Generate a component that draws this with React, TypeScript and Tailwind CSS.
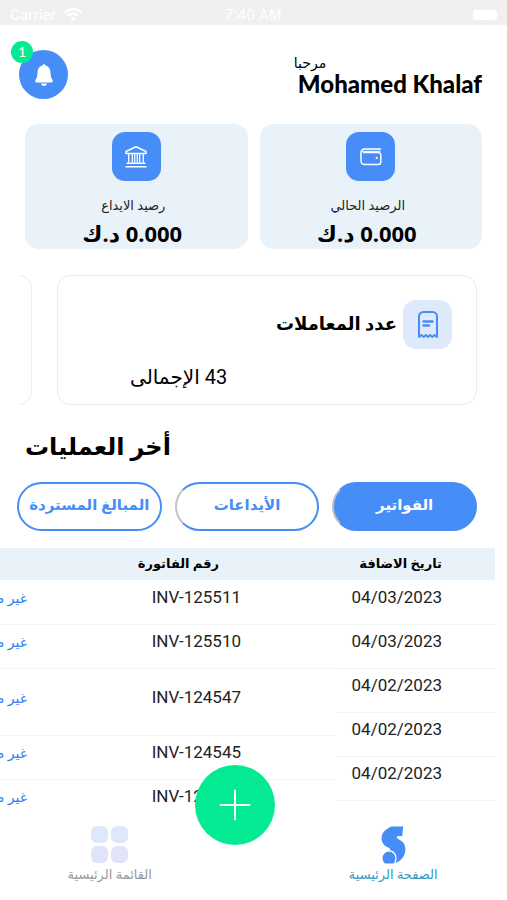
import type { ReactNode } from "react";

const arabic = "font-['Lato','DejaVu_Sans',sans-serif]";
const figures = "font-['Roboto','DejaVu_Sans',sans-serif]";

function BellIcon() {
  return (
    <svg viewBox="0 0 24 24" className="size-6" fill="#fff" aria-hidden="true">
      <path d="M12 1.200c.9 0 1.500.6 1.600 1.400 2.900.8 4.600 3 4.800 5.800.2 3.600.5 6.100 1.500 7.500.6.8.9 1.400.9 2 0 .9-.6 1.500-1.600 1.500H4.800c-1 0-1.600-.6-1.600-1.500 0-.6.3-1.200.9-2 1-1.400 1.300-3.900 1.500-7.500.2-2.800 1.900-5 4.800-5.800.1-.8.7-1.400 1.600-1.400z" />
      <path d="M9 20.600h6c-.3 1.400-1.500 2.300-3 2.300s-2.700-.9-3-2.300z" />
    </svg>
  );
}

function BankIcon() {
  return (
    <svg viewBox="0 0 24 24" className="size-6" fill="none" stroke="#fff" strokeWidth="1.500" strokeLinejoin="round" aria-hidden="true">
      <path d="M2 6.500 12 1.800 22 6.500v2H2z" />
      <path d="M4.700 8.500v9M8.300 8.500v9M10.700 8.500v9M13.300 8.500v9M15.700 8.500v9M19.300 8.500v9" strokeWidth="1.300" />
      <path d="M2.500 18.300h19M1.500 21.800h21" />
    </svg>
  );
}

function WalletIcon() {
  return (
    <svg viewBox="0 0 24 24" className="size-6" fill="none" stroke="#fff" strokeWidth="1.500" strokeLinecap="round" aria-hidden="true">
      <path d="M21.500 4H5.500A3.500 3.500 0 0 0 2 7.500V16a3.500 3.500 0 0 0 3.500 3.500H19a2.800 2.800 0 0 0 2.800-2.800V10A2.500 2.500 0 0 0 19.300 7.500H4.500" />
      <path d="M3 6.300h18" strokeWidth="1" />
      <circle cx="17.500" cy="13" r=".6" fill="#fff" strokeWidth="1" />
    </svg>
  );
}

function ReceiptIcon() {
  return (
    <svg viewBox="0 0 24 30" className="h-[30px] w-6" fill="none" stroke="#478df8" strokeWidth="2" strokeLinecap="round" strokeLinejoin="round" aria-hidden="true">
      <path d="M3 27V6.500A4.500 4.500 0 0 1 7.500 2h9A4.500 4.500 0 0 1 21 6.500V27l-2.500-2-2.200 2-2.200-2-2.100 2-2.100-2-2.200 2-2.200-2z" />
      <path d="M7.500 11.500h9M7.500 15.500h5.500" strokeWidth="2.400" />
    </svg>
  );
}

function WifiIcon() {
  return (
    <svg viewBox="0 0 18 14" className="h-[14px] w-[18px]" fill="#fff" aria-hidden="true">
      <path d="M9 0C5.500 0 2.300 1.300 0 3.500l1.700 1.800A10.600 10.600 0 0 1 9 2.500c2.800 0 5.400 1 7.300 2.800L18 3.500A13 13 0 0 0 9 0z" />
      <path d="M9 4.500c-2.300 0-4.400.9-6 2.300l1.800 1.800A6.300 6.300 0 0 1 9 7c1.600 0 3 .6 4.200 1.600L15 6.800a9 9 0 0 0-6-2.300z" />
      <path d="M9 9a4 4 0 0 0-2.800 1.100L9 13l2.800-2.900A4 4 0 0 0 9 9z" />
    </svg>
  );
}

function HomeLogo() {
  return (
    <svg viewBox="0 0 26 38" className="h-[38px] w-[26px]" fill="#478df8" aria-hidden="true">
      <path d="M23.300.500 22.200 10.300C20 9.600 17.800 9.800 16.800 10.800 16.300 11.800 17.500 12.800 19.500 13.800 23.500 15.700 25.400 19 25.400 23.300 25.400 29.500 21.800 34.500 15.500 37.300 16.200 35.700 16.600 34 16.600 32.300 16.600 28 13.800 24.700 9.800 24.300 10.800 23 10 22.300 8.200 21.500 4 19.800 1.600 16.500 1.600 12.200 1.600 7 5.500 3 11.300.5z" />
      <path d="M2.500 32a6.400 6.400 0 0 1 12.800 0c0 2.100-.5 3.800-1.600 5.400H5A6.400 6.400 0 0 1 2.500 32z" />
    </svg>
  );
}

function BalanceCard({ icon, label }: { icon: ReactNode; label: string }) {
  return (
    <section className="flex flex-1 flex-col items-center rounded-[14px] bg-[#eaf2f9] pt-2 pb-[2px]">
      <div className="flex size-[49px] items-center justify-center rounded-[13px] bg-[#478df8]">{icon}</div>
      <h2 className="mt-3 pr-[6px] text-[13px] leading-6 text-[#222]">{label}</h2>
      <p className="mt-[2px] pr-2 font-['Noto_Sans','DejaVu_Sans',sans-serif] text-[22px] leading-7 font-bold text-black">0.000 د.ك</p>
    </section>
  );
}

const filters = [
  { label: "الفواتير", style: "border-[#478df8] border-l-[#b9bec4] bg-[#478df8] text-white" },
  { label: "الأيداعات", style: "border-[#478df8] border-l-[#c4c4c4] bg-white text-[#478df8]" },
  { label: "المبالغ المستردة", style: "border-[#478df8] bg-white text-[#478df8]" },
];

const dates = ["04/03/2023", "04/03/2023", "04/02/2023", "04/02/2023", "04/02/2023"];
const invoices = ["INV-125511", "INV-125510", "INV-124547", "INV-124545", "INV-124544"];

export default function App() {
  return (
    <div dir="rtl" lang="ar" className={`flex h-screen flex-col overflow-hidden bg-white text-black ${arabic}`}>
      <div dir="ltr" className="grid h-[25px] shrink-0 grid-cols-3 items-center bg-[#f0f0f0] px-[10px] pt-1 font-['Inter',sans-serif] text-sm leading-5 text-white">
        <span className="flex items-center gap-2">Carrier <WifiIcon /></span>
        <span className="text-center">7:40 AM</span>
        <span className="h-[10px] w-6 justify-self-end rounded-[3px] bg-white" />
      </div>

      <header dir="ltr" className="flex h-[74px] shrink-0 items-start justify-between px-[25px] pt-[25px]">
        <button type="button" aria-label="الإشعارات" className="relative -ml-[6px] flex size-[49px] items-center justify-center rounded-full bg-[#478df8]">
          <BellIcon />
          <span className="absolute -top-[9px] -left-2 flex size-[22px] items-center justify-center rounded-full bg-[#04ea93] text-sm text-white">1</span>
        </button>
        <div>
          <p className="mt-1 text-sm leading-[18px]">مرحبا</p>
          <h1 className="pl-1 text-2xl leading-6 font-black">Mohamed Khalaf</h1>
        </div>
      </header>

      <main className="min-h-0 flex-1 overflow-hidden">
        <div className="mt-[25px] flex gap-3 px-[25px]">
          <BalanceCard icon={<WalletIcon />} label="الرصيد الحالي" />
          <BalanceCard icon={<BankIcon />} label="رصيد الايداع" />
        </div>

        <div className="mt-[26px] mr-[30px] ml-[18px] flex gap-[25px] overflow-hidden">
          <section className="h-[130px] flex-1 rounded-[14px] border border-[#ececec] px-6 pt-6">
            <div className="flex items-center gap-[6px]">
              <div className="flex size-[49px] items-center justify-center rounded-[13px] bg-[#dfe9fc]"><ReceiptIcon /></div>
              <h2 className="pb-1 text-lg font-bold">عدد المعاملات</h2>
            </div>
            <p className={`mt-3 pl-12 text-left text-xl leading-8 ${figures}`}>43 الإجمالى</p>
          </section>
          <div className="h-[130px] w-[14px] shrink-0 rounded-r-[14px] border border-l-0 border-[#ececec]" />
        </div>

        <h2 className="mt-[25px] px-[25px] text-left text-2xl leading-8 font-bold">أخر العمليات</h2>

        <div className="mt-5 mr-[30px] ml-[17px] flex gap-[13px]">
          {filters.map((f) => (
            <button key={f.label} type="button" className={`h-[49px] flex-1 rounded-full border-2 pb-1 text-[15px] font-bold whitespace-nowrap ${f.style}`}>
              {f.label}
            </button>
          ))}
        </div>

        <div className={`mt-[17px] mr-3 flex items-start overflow-hidden text-[17px] text-[#222] ${figures}`}>
          <table className="w-[159px] shrink-0">
            <thead>
              <tr className="h-8 bg-[#eaf2f9]"><th scope="col" className="pr-[53px] text-right text-[13px] text-black">تاريخ الاضافة</th></tr>
            </thead>
            <tbody>
              {dates.map((d, i) => (
                <tr key={i} className="h-11 border-b border-[#f3f3f3]"><td className="pr-[53px] pb-2">{d}</td></tr>
              ))}
            </tbody>
          </table>
          <table className="w-[480px] shrink-0">
            <thead>
              <tr className="h-8 bg-[#eaf2f9]">
                <th scope="col" className="w-[218px] pr-[117px] text-right text-[13px] whitespace-nowrap text-black">رقم الفاتورة</th>
                <th scope="col" aria-label="الحالة" />
              </tr>
            </thead>
            <tbody>
              {invoices.map((n, i) => (
                <tr key={n} className={`border-b border-[#f6f6f6] ${i === 2 ? "h-[67px]" : "h-11"}`}>
                  <td className="pr-[95px] pb-2 whitespace-nowrap">{n}</td>
                  <td className="pr-[91px] pb-2 text-sm text-[#2e7ff5]">غير مدفوع</td>
                </tr>
              ))}
            </tbody>
          </table>
        </div>
      </main>

      <nav dir="ltr" className="relative grid h-[83px] shrink-0 grid-cols-2 bg-white pt-[9px] text-[13px] leading-5">
        <a href="#menu" className="mr-[34px] flex flex-col items-center text-[#999]">
          <span className="grid grid-cols-2 gap-[3px]">
            <span className="size-[17px] rounded-[6px] bg-[#dfe7fa]" />
            <span className="size-[17px] rounded-[6px] bg-[#dfe7fa]" />
            <span className="size-[17px] rounded-[6px] bg-[#dfe4fa]" />
            <span className="size-[17px] rounded-[6px] bg-[#e1e4fa]" />
          </span>
          <span className="mt-px">القائمة الرئيسية</span>
        </a>
        <a href="#home" className="ml-[26px] flex flex-col items-center text-[#3799c4]">
          <HomeLogo />
          <span>الصفحة الرئيسية</span>
        </a>
        <button type="button" aria-label="إضافة" className="absolute -top-[52px] right-[232px] flex size-20 items-center justify-center rounded-full bg-[#04ea93]">
          <svg viewBox="0 0 32 32" className="size-8" stroke="#fff" strokeWidth="2" strokeLinecap="round" aria-hidden="true">
            <path d="M16 1.500v29M1.500 16h29" />
          </svg>
        </button>
      </nav>
    </div>
  );
}
